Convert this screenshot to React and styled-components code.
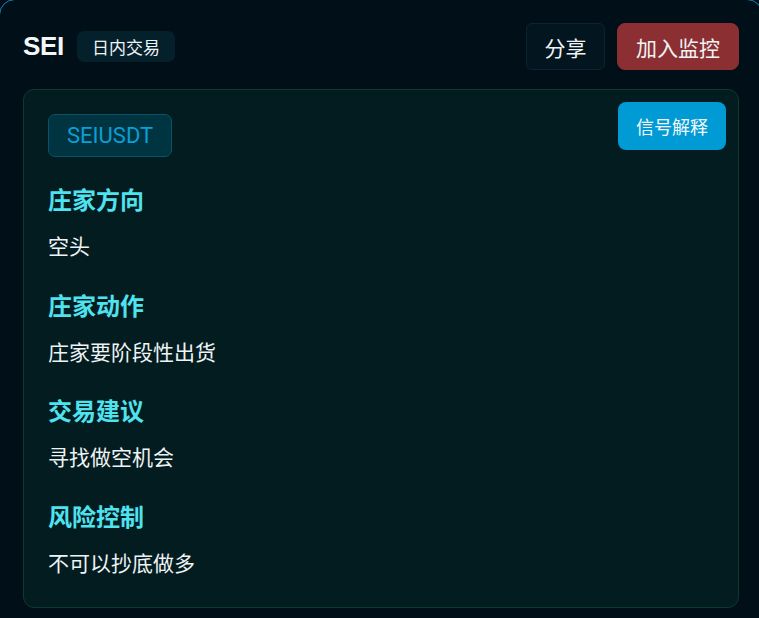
import React from "react";
import styled, { createGlobalStyle } from "styled-components";

const Global = createGlobalStyle`
  html, body {
    margin: 0;
    padding: 0;
    background: #010f19;
    overflow: hidden;
  }
  body {
    font-family: Roboto, "Noto Sans CJK SC", sans-serif;
    color: #eef3f5;
  }
`;

const Panel = styled.div`
  margin: -1px -4px 0 -1px;
  min-height: 700px;
  border: 1px solid #0f84b8;
  border-radius: 16px;
  background: #010f19;
  padding: 23px;
  box-sizing: border-box;
  display: flex;
  flex-direction: column;
  gap: 19px;
`;

const Header = styled.div`
  display: flex;
  align-items: center;
  justify-content: space-between;
  height: 47px;
`;

const TitleGroup = styled.div`
  display: flex;
  align-items: center;
  gap: 13px;
`;

const Symbol = styled.h1`
  margin: 0;
  font-family: "Liberation Sans", Arial, sans-serif;
  font-weight: 700;
  font-size: 26px;
  color: #f4f7f8;
  letter-spacing: -0.3px;
`;

const Tag = styled.span`
  display: inline-flex;
  align-items: center;
  height: 31px;
  padding: 0 15px;
  border-radius: 7px;
  background: #04202b;
  font-family: "Noto Sans CJK SC", sans-serif;
  font-size: 17px;
  color: #eef3f5;
`;

const Actions = styled.div`
  display: flex;
  align-items: center;
  gap: 12px;
`;

const Button = styled.button`
  height: 47px;
  padding: 0 ${(p) => (p.$variant === "danger" ? 18 : 17.5)}px;
  box-sizing: border-box;
  display: inline-flex;
  align-items: center;
  justify-content: center;
  border-radius: ${(p) => (p.$variant === "danger" ? 8 : 6)}px;
  border: 1px solid
    ${(p) => (p.$variant === "danger" ? "#8b2f33" : "#0a2531")};
  background: ${(p) => (p.$variant === "danger" ? "#8b2f33" : "#03161f")};
  color: #f1f4f5;
  font-family: "Noto Sans CJK SC", sans-serif;
  font-size: 21px;
  cursor: pointer;
`;

const Card = styled.div`
  position: relative;
  border: 1px solid #0c3a2d;
  border-radius: 11px;
  background: #031c1f;
  padding: 24px 24px 30px;
  display: flex;
  flex-direction: column;
  align-items: flex-start;
`;

const Pair = styled.span`
  display: inline-flex;
  align-items: center;
  height: 43px;
  box-sizing: border-box;
  padding: 0 18px;
  border-radius: 7px;
  border: 1px solid #0a5269;
  background: #013441;
  color: #0a9fd6;
  font-family: Roboto, sans-serif;
  font-size: 22px;
`;

const ExplainButton = styled.button`
  position: absolute;
  top: 12px;
  right: 12px;
  height: 48px;
  padding: 0 18px;
  border: none;
  border-radius: 8px;
  background: #009bd5;
  color: #f4f8fa;
  font-family: "Noto Sans CJK SC", sans-serif;
  font-size: 18px;
  cursor: pointer;
`;

const Section = styled.section`
  margin-top: 28.5px;
  &:first-of-type {
    margin-top: 26px;
  }
`;

const Heading = styled.h3`
  margin: 0;
  font-family: "Noto Sans CJK SC", sans-serif;
  font-weight: 700;
  font-size: 24px;
  line-height: 32px;
  color: #4fe2ef;
`;

const Body = styled.p`
  margin: 15px 0 0;
  font-family: "Noto Sans CJK SC", sans-serif;
  font-size: 21px;
  line-height: 30px;
  color: #eef3f5;
`;

const items = [
  ["庄家方向", "空头"],
  ["庄家动作", "庄家要阶段性出货"],
  ["交易建议", "寻找做空机会"],
  ["风险控制", "不可以抄底做多"],
];

export default function App() {
  return (
    <>
      <Global />
      <Panel>
        <Header>
          <TitleGroup>
            <Symbol>SEI</Symbol>
            <Tag>日内交易</Tag>
          </TitleGroup>
          <Actions>
            <Button>分享</Button>
            <Button $variant="danger">加入监控</Button>
          </Actions>
        </Header>
        <Card>
          <ExplainButton>信号解释</ExplainButton>
          <Pair>SEIUSDT</Pair>
          {items.map(([h, b]) => (
            <Section key={h}>
              <Heading>{h}</Heading>
              <Body>{b}</Body>
            </Section>
          ))}
        </Card>
      </Panel>
    </>
  );
}
